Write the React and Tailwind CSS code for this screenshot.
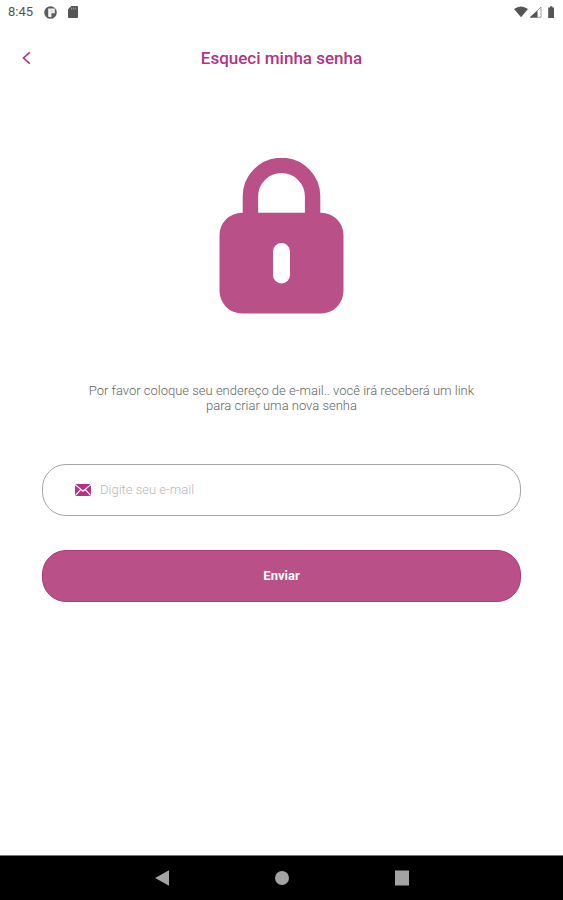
import React from "react";

function StatusBar() {
  return (
    <div className="flex h-6 items-center justify-between pl-2 pr-1 text-[#555]">
      <div className="flex items-center gap-[11px]">
        <span className="text-[13px] leading-6">8:45</span>
        <svg className="size-[13px]" viewBox="0 0 13 13" aria-hidden="true">
          <circle cx="6.5" cy="6.5" r="6.3" fill="#5c5c5c" />
          <path d="M4.2 2.6h6.6v4.6H7.4v4A5 5 0 0 1 4.2 10.4Z" fill="#f2f2f2" />
          <path d="M6.6 4.4h2.6v1.4H6.6Z" fill="#d0d0d0" />
        </svg>
        <svg className="h-3 w-[10px]" viewBox="0 0 10 12" aria-hidden="true">
          <path d="M3.3 0H9a1 1 0 0 1 1 1v10a1 1 0 0 1-1 1H1a1 1 0 0 1-1-1V3.2Z" fill="#555" />
          <path d="M3.6 1.5v2M5.6 1.5v2M7.6 1.5v2" stroke="#999" strokeWidth="1" />
        </svg>
      </div>
      <svg className="h-3 w-[45px]" viewBox="0 0 45 12" aria-hidden="true">
        <path d="M0 3Q7-2.2 14 3L7 11.3Z" fill="#555" />
        <path d="M27 1v10.3H16.5Z" fill="#fff" stroke="#888" strokeWidth="0.8" />
        <path d="M23.5 4.5v7h-8Z" fill="#555" />
        <path d="M36 .2h2.4v1.3H40V12h-5.8V1.5H36Z" fill="#555" />
      </svg>
    </div>
  );
}

function Header() {
  return (
    <header className="grid h-[68px] grid-cols-[40px_1fr_40px] items-center text-[#b53284]">
      <button type="button" aria-label="Voltar" className="flex h-10 items-center pl-[22px]">
        <svg className="h-[14px] w-[9px]" viewBox="0 0 9 14" fill="none" aria-hidden="true">
          <path d="M7.8 1.3 1.5 7l6.3 5.7" stroke="currentColor" strokeWidth="1.6" />
        </svg>
      </button>
      <h1 className="text-center text-[17px] font-medium leading-6">Esqueci minha senha</h1>
    </header>
  );
}

function Lock() {
  return (
    <svg className="mx-auto mt-[66px] h-[156px] w-[125px]" viewBox="0 0 125 156" aria-hidden="true">
      <path d="M31.4 62V38.5a31.1 31.1 0 0 1 62.2 0V62" fill="none" stroke="#b95088" strokeWidth="15.4" />
      <path
        fillRule="evenodd"
        fill="#b95088"
        d="M23 54.7h79a22.5 22.5 0 0 1 22.5 22.5V133a22.5 22.5 0 0 1-22.5 22.5H23A22.5 22.5 0 0 1 .5 133V77.2A22.5 22.5 0 0 1 23 54.7ZM62.5 85a8.5 8.5 0 0 0-8.5 8.5V117a8.5 8.5 0 0 0 17 0V93.5a8.5 8.5 0 0 0-8.5-8.5Z"
      />
    </svg>
  );
}

function NavBar() {
  return (
    <nav className="flex h-[45px] items-center justify-center gap-[104px] border-t border-[#777] bg-black text-[#a3a3a3]">
      <button type="button" aria-label="Voltar">
        <svg className="size-4" viewBox="0 0 16 16" aria-hidden="true">
          <path d="M15 .3v15.4L1 8Z" fill="currentColor" />
        </svg>
      </button>
      <button type="button" aria-label="Início">
        <svg className="size-4" viewBox="0 0 16 16" aria-hidden="true">
          <circle cx="8" cy="8" r="7" fill="currentColor" />
        </svg>
      </button>
      <button type="button" aria-label="Recentes">
        <svg className="size-4" viewBox="0 0 16 16" aria-hidden="true">
          <path d="M1 .5h14v15H1Z" fill="currentColor" />
        </svg>
      </button>
    </nav>
  );
}

export default function App() {
  return (
    <div className="flex min-h-screen flex-col bg-white font-['Roboto',sans-serif]">
      <StatusBar />
      <Header />
      <main className="flex-1">
        <Lock />
        <p className="mx-auto mt-[69px] max-w-[400px] text-center text-[13px] font-light leading-[15px] text-[#666]">
          Por favor coloque seu endereço de e-mail.. você irá receberá um link para criar uma nova senha
        </p>
        <form className="mx-[42px] mt-[51px]" onSubmit={(e) => e.preventDefault()}>
          <div className="flex h-[52px] items-center gap-[9px] rounded-[24px] border border-[#a6a6a6] px-8">
            <label htmlFor="email" aria-label="E-mail">
              <svg className="h-3 w-4" viewBox="0 0 16 12" aria-hidden="true">
                <rect width="16" height="12" rx="1.5" fill="#b53284" />
                <path d="M.3.7 8 7.2 15.7.7M.5 11.3 5.7 5.6M15.5 11.3 10.3 5.6" fill="none" stroke="#fff" strokeWidth="1.2" />
              </svg>
            </label>
            <input
              id="email"
              type="email"
              aria-label="E-mail"
              placeholder="Digite seu e-mail"
              className="min-w-0 flex-1 bg-transparent text-[13px] font-light leading-5 text-[#555] outline-none placeholder:text-[#b8b8b8]"
            />
          </div>
          <button
            type="submit"
            className="mt-[34px] h-[52px] w-full rounded-[24px] border border-[#b03a7c] bg-[#b95088] text-[13px] font-bold text-white"
          >
            Enviar
          </button>
        </form>
      </main>
      <NavBar />
    </div>
  );
}
